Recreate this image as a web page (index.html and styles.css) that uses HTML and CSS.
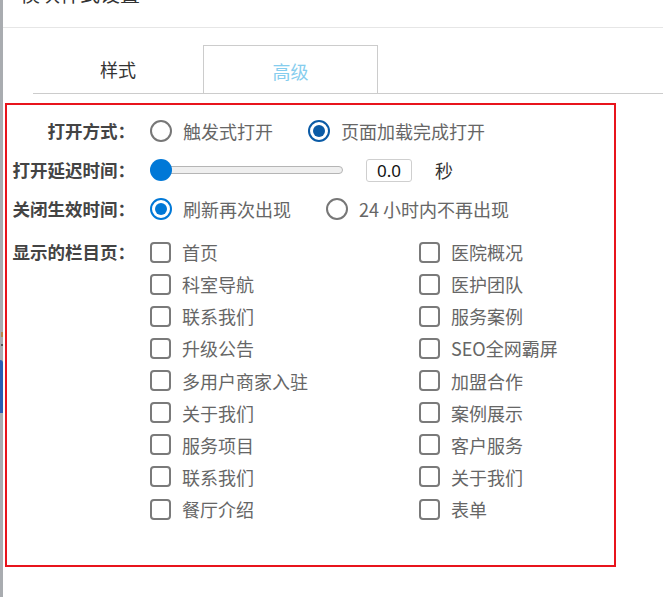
FILE: index.html
```html
<!DOCTYPE html>
<html lang="zh">
<head>
<meta charset="utf-8">
<link rel="stylesheet" href="styles.css">
</head>
<body>
<div class="app">
  <div class="strip">
    <div class="strip-dot"></div>
    <div class="strip-dot dark"></div>
    <div class="strip-blue"></div>
  </div>
  <div class="panel">
    <div class="header"><div class="title">模块样式设置</div></div>
    <div class="tabs">
      <div class="tab">样式</div>
      <div class="tab active">高级</div>
    </div>
    <div class="box">
      <div class="form">
        <div class="label">打开方式：</div>
        <div class="control">
          <span class="opt"><span class="radio"></span><span class="txt">触发式打开</span></span>
          <span class="opt"><span class="radio on dark"></span><span class="txt">页面加载完成打开</span></span>
        </div>

        <div class="label">打开延迟时间：</div>
        <div class="control">
          <div class="slider"><span class="thumb"></span></div>
          <span class="num">0.0</span>
          <span class="unit">秒</span>
        </div>

        <div class="label">关闭生效时间：</div>
        <div class="control">
          <span class="opt"><span class="radio on"></span><span class="txt">刷新再次出现</span></span>
          <span class="opt"><span class="radio"></span><span class="txt">24 小时内不再出现</span></span>
        </div>

        <div class="label pages">显示的栏目页：</div>
        <div class="checks">
          <span class="opt"><span class="check"></span><span class="txt">首页</span></span>
          <span class="opt"><span class="check"></span><span class="txt">医院概况</span></span>
          <span class="opt"><span class="check"></span><span class="txt">科室导航</span></span>
          <span class="opt"><span class="check"></span><span class="txt">医护团队</span></span>
          <span class="opt"><span class="check"></span><span class="txt">联系我们</span></span>
          <span class="opt"><span class="check"></span><span class="txt">服务案例</span></span>
          <span class="opt"><span class="check"></span><span class="txt">升级公告</span></span>
          <span class="opt"><span class="check"></span><span class="txt">SEO全网霸屏</span></span>
          <span class="opt"><span class="check"></span><span class="txt">多用户商家入驻</span></span>
          <span class="opt"><span class="check"></span><span class="txt">加盟合作</span></span>
          <span class="opt"><span class="check"></span><span class="txt">关于我们</span></span>
          <span class="opt"><span class="check"></span><span class="txt">案例展示</span></span>
          <span class="opt"><span class="check"></span><span class="txt">服务项目</span></span>
          <span class="opt"><span class="check"></span><span class="txt">客户服务</span></span>
          <span class="opt"><span class="check"></span><span class="txt">联系我们</span></span>
          <span class="opt"><span class="check"></span><span class="txt">关于我们</span></span>
          <span class="opt"><span class="check"></span><span class="txt">餐厅介绍</span></span>
          <span class="opt"><span class="check"></span><span class="txt">表单</span></span>
        </div>
      </div>
    </div>
  </div>
</div>
</body>
</html>
```

FILE: styles.css
```css
html, body {
  margin: 0;
  padding: 0;
  background: #ffffff;
}
body {
  font-family: "Noto Sans CJK SC", "Noto Sans", sans-serif;
  width: 663px;
  height: 597px;
  overflow: hidden;
}
.app {
  display: flex;
  height: 597px;
}
.strip {
  width: 3px;
  flex: none;
  background: #a9acb0;
  display: flex;
  flex-direction: column;
}
.strip-dot {
  width: 2px;
  height: 5px;
  margin-top: 332px;
  margin-left: 1px;
  background: #b8864a;
}
.strip-dot.dark {
  height: 2px;
  margin-top: 7px;
  background: #555;
}
.strip-blue {
  margin-top: 14px;
  width: 3px;
  height: 53px;
  background: #2d5db3;
  border-top-right-radius: 3px;
}
.panel {
  flex: 1;
  display: flex;
  flex-direction: column;
}
.header {
  height: 27px;
  border-bottom: 1px solid #e6e6e6;
  padding-left: 17px;
}
.title {
  margin-top: -16px;
  font-size: 20px;
  line-height: 20px;
  color: #333;
}
.tabs {
  margin-top: 17px;
  margin-left: 30px;
  display: flex;
  height: 48px;
  border-bottom: 1px solid #cccccc;
}
.tab {
  width: 170px;
  box-sizing: border-box;
  display: flex;
  align-items: center;
  justify-content: center;
  font-size: 18px;
  color: #333;
}
.tab.active {
  width: 175px;
  border: 1px solid #cccccc;
  border-bottom: none;
  color: #86cdee;
  padding-top: 3px;
}
.box {
  margin-top: 9px;
  margin-left: 2px;
  width: 611px;
  height: 464px;
  box-sizing: border-box;
  border: 2px solid #e8141c;
  padding-top: 10px;
}
.form {
  display: grid;
  grid-template-columns: 129px 1fr;
  column-gap: 14px;
  row-gap: 7px;
  align-items: start;
}
.label {
  height: 32px;
  line-height: 32px;
  text-align: right;
  font-size: 17.5px;
  font-weight: bold;
  color: #444;
  white-space: nowrap;
  margin-right: 1px;
}
.label.pages,
.label.pages + .checks {
  margin-top: 4px;
}
.control {
  height: 32px;
  display: flex;
  align-items: center;
}
.opt {
  display: flex;
  align-items: center;
  height: 32px;
}
.control .opt + .opt {
  margin-left: 35px;
}
.txt {
  margin-left: 11px;
  font-size: 18px;
  color: #666;
  white-space: nowrap;
}
.radio {
  width: 22px;
  height: 22px;
  box-sizing: border-box;
  border: 2px solid #777;
  border-radius: 50%;
  position: relative;
  flex: none;
}
.radio.on {
  border-color: #0078d7;
}
.radio.on::after {
  content: "";
  position: absolute;
  left: 3px;
  top: 3px;
  width: 12px;
  height: 12px;
  border-radius: 50%;
  background: #0078d7;
}
.radio.on.dark {
  border-color: #0b5ba6;
}
.radio.on.dark::after {
  background: #0b5ba6;
}
.slider {
  width: 193px;
  height: 8px;
  box-sizing: border-box;
  border: 1px solid #b5b5b5;
  border-radius: 4px;
  background: #efefef;
  position: relative;
}
.thumb {
  position: absolute;
  left: -1px;
  top: -8px;
  width: 22px;
  height: 22px;
  border-radius: 50%;
  background: #0078d7;
}
.num {
  margin-left: 23px;
  width: 46px;
  height: 23px;
  box-sizing: border-box;
  border: 1px solid #cfcfcf;
  border-radius: 3px;
  font-family: "Noto Sans", sans-serif;
  font-size: 17px;
  line-height: 21px;
  text-align: center;
  color: #111;
}
.unit {
  margin-left: 23px;
  font-size: 18px;
  color: #333;
}
.checks {
  display: grid;
  grid-template-columns: 269px 1fr;
  grid-auto-rows: 32.125px;
}
.checks .opt {
  height: 32px;
}
.check {
  width: 21px;
  height: 21px;
  box-sizing: border-box;
  border: 2px solid #7a7a7a;
  border-radius: 4px;
  flex: none;
}
```
